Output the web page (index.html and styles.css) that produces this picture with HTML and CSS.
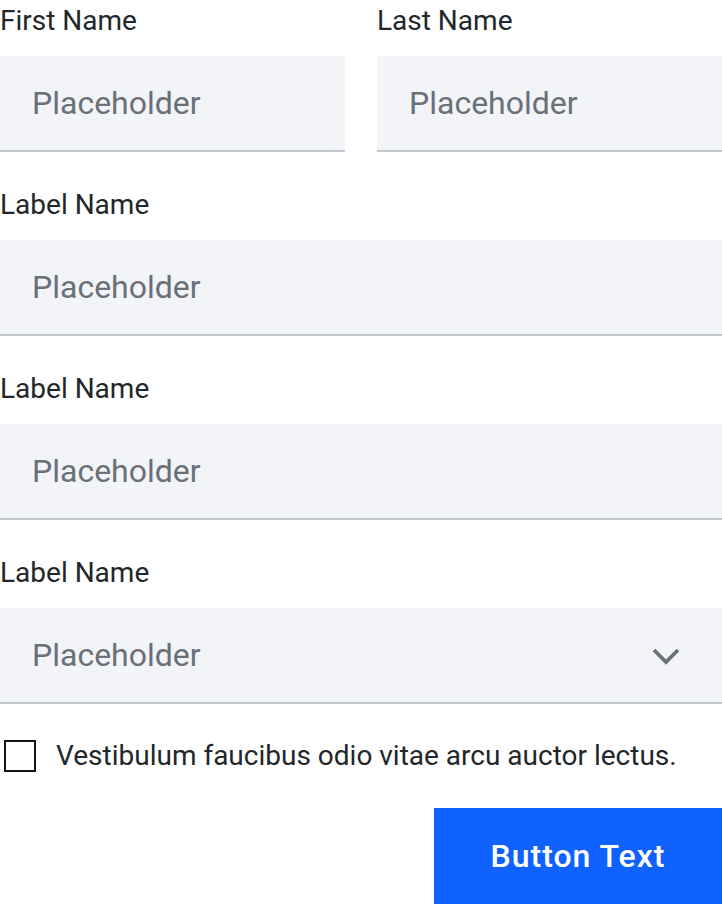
FILE: index.html
```html
<!DOCTYPE html>
<html lang="en">
<head>
<meta charset="utf-8">
<title>Form</title>
<link rel="stylesheet" href="styles.css">
</head>
<body>
<form class="form">
  <div class="row-2">
    <div class="field">
      <label class="label" for="fn">First Name</label>
      <input class="input" id="fn" type="text" placeholder="Placeholder">
    </div>
    <div class="field">
      <label class="label" for="ln">Last Name</label>
      <input class="input" id="ln" type="text" placeholder="Placeholder">
    </div>
  </div>
  <div class="field">
    <label class="label" for="f1">Label Name</label>
    <input class="input" id="f1" type="text" placeholder="Placeholder">
  </div>
  <div class="field">
    <label class="label" for="f2">Label Name</label>
    <input class="input" id="f2" type="text" placeholder="Placeholder">
  </div>
  <div class="field">
    <label class="label" for="f3">Label Name</label>
    <div class="select-wrap">
      <select class="select" id="f3">
        <option selected disabled>Placeholder</option>
        <option>Option 1</option>
      </select>
      <svg class="chevron" width="32" height="20" viewBox="0 0 32 20" aria-hidden="true">
        <polyline points="3,4 15,16 27,4" fill="none" stroke="#697077" stroke-width="3.8" stroke-linecap="butt" stroke-linejoin="miter"/>
      </svg>
    </div>
  </div>
  <label class="check">
    <span class="box"></span>
    <span class="check-text">Vestibulum faucibus odio vitae arcu auctor lectus.</span>
  </label>
  <div class="actions">
    <button class="btn" type="button">Button Text</button>
  </div>
</form>
</body>
</html>
```

FILE: styles.css
```css
* { box-sizing: border-box; }
html, body { margin: 0; padding: 0; background: #ffffff; }
body {
  font-family: Roboto, "Liberation Sans", Arial, sans-serif;
  color: #21272a;
  width: 722px;
}
.form {
  display: flex;
  flex-direction: column;
  gap: 32px;
}
.row-2 {
  display: grid;
  grid-template-columns: 345px 345px;
  column-gap: 32px;
}
.field {
  display: flex;
  flex-direction: column;
}
.label {
  font-size: 28px;
  line-height: 42px;
  height: 40px;
  margin-bottom: 16px;
  color: #21272a;
  letter-spacing: 0;
}
.input, .select {
  display: block;
  width: 100%;
  height: 96px;
  border: 0;
  border-bottom: 2px solid #c1c7cd;
  background: #f2f4f8;
  padding: 0 32px;
  margin: 0;
  font-family: Roboto, "Liberation Sans", Arial, sans-serif;
  font-size: 32px;
  line-height: 40px;
  color: #21272a;
  outline: none;
  border-radius: 0;
}
.input::placeholder { color: #697077; opacity: 1; }
.select-wrap { position: relative; }
.select {
  -webkit-appearance: none;
  appearance: none;
  color: #697077;
}
.chevron {
  position: absolute;
  right: 39px;
  top: 38px;
  pointer-events: none;
}
.check {
  display: flex;
  align-items: center;
  height: 40px;
  gap: 20px;
  padding-left: 4px;
}
.box {
  width: 32px;
  height: 32px;
  border: 2px solid #121619;
  flex: none;
}
.check-text {
  font-size: 28px;
  line-height: 40px;
  color: #21272a;
}
.actions {
  display: flex;
  justify-content: flex-end;
}
.btn {
  width: 288px;
  height: 96px;
  border: 0;
  background: #0f62fe;
  color: #ffffff;
  font-family: Roboto, "Liberation Sans", Arial, sans-serif;
  font-size: 32px;
  font-weight: 500;
  letter-spacing: 1px;
  padding: 0;
  border-radius: 0;
}
```
